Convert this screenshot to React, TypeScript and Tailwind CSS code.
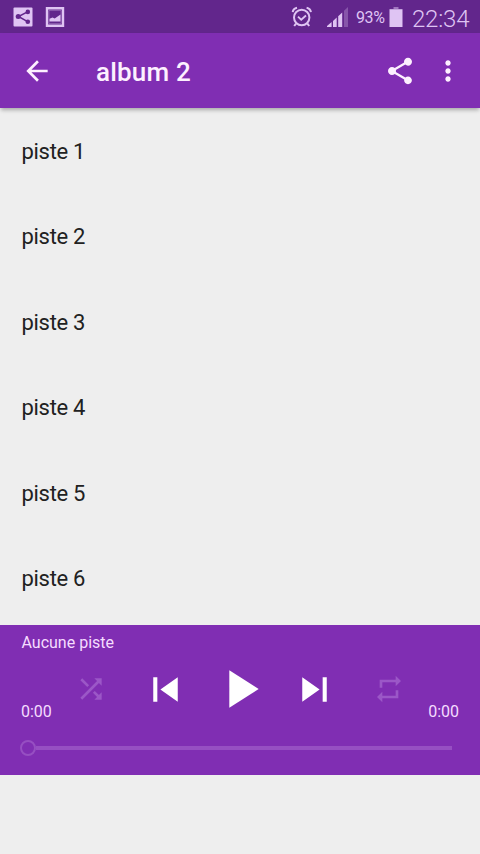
import React from 'react';

const TRACKS = ['piste 1', 'piste 2', 'piste 3', 'piste 4', 'piste 5', 'piste 6'];

const SHARE_PATH =
  'M18 16.08c-.76 0-1.44.3-1.96.77L8.91 12.7c.05-.23.09-.46.09-.7s-.04-.47-.09-.7l7.05-4.11c.54.5 1.25.81 2.04.81 1.66 0 3-1.34 3-3s-1.34-3-3-3-3 1.34-3 3c0 .24.04.47.09.7L8.04 9.81C7.5 9.31 6.79 9 6 9c-1.66 0-3 1.34-3 3s1.34 3 3 3c.79 0 1.5-.31 2.04-.81l7.12 4.16c-.05.21-.08.43-.08.65 0 1.61 1.31 2.92 2.92 2.92 1.61 0 2.92-1.31 2.92-2.92s-1.31-2.92-2.92-2.92z';

interface IconProps {
  d: string;
  className?: string;
}

const Icon: React.FC<IconProps> = ({ d, className = 'size-8' }) => (
  <svg viewBox="0 0 24 24" fill="currentColor" className={`shrink-0 ${className}`}>
    <path d={d} />
  </svg>
);

const StatusBar: React.FC = () => (
  <div className="flex h-[33px] items-center bg-[#62268c] pl-[13px] pr-[9px] pt-px text-[#dfc4f3]">
    <svg viewBox="0 0 20 20" className="size-5">
      <rect x="0.5" y="0.5" width="19" height="19" rx="1" fill="currentColor" />
      <path d="M15 4.7 5.5 9.5 15 14.8" fill="none" stroke="#62268c" strokeWidth="1.5" />
      <circle cx="14.8" cy="4.9" r="2.3" fill="#62268c" />
      <circle cx="5.2" cy="9.6" r="2.5" fill="#62268c" />
      <circle cx="14.8" cy="14.7" r="2.3" fill="#62268c" />
    </svg>
    <svg viewBox="0 0 20 20" className="ml-3 size-5">
      <path d="M2 1.3h16v17.4H2z" fill="none" stroke="currentColor" strokeWidth="2.4" />
      <path d="M4 3.5h12v13H4z" fill="none" stroke="currentColor" strokeWidth="1" opacity="0.3" />
      <path d="M4.5 14.5v-2.7l3-1.4 2.2 1.2 5.8-4v6.9z" fill="currentColor" />
    </svg>

    <div className="ml-auto flex items-center">
      <svg viewBox="0 0 22 22" className="size-[22px]" fill="none" stroke="currentColor" strokeWidth="2">
        <circle cx="10.7" cy="11.5" r="7.7" />
        <path d="m7 10.6 3.2 3.1 4.8-4.2" strokeWidth="1.8" />
        <path d="M1.7 6.2C2 4 3.7 2.2 6 1.7M19.9 6.2C19.6 4 17.9 2.2 15.6 1.7M5 17.6l-1.8 2.4M16.4 17.6l1.8 2.4" strokeWidth="2" />
      </svg>
      <svg viewBox="0 0 22 22" className="ml-[14px] size-[22px]" fill="currentColor">
        <path d="M0 21v-1l4.6-4v5zM6 14.9l3.7-3.3V21H6zM11.2 10.2l4-3.8V21h-4z" />
        <path d="m17 4.8 4-3.9V21h-4z" opacity="0.3" />
      </svg>
      <span className="ml-[7px] w-[29px] whitespace-nowrap pt-0.5 text-[16px] leading-5 tracking-[-0.4px]">93%</span>
      <svg viewBox="0 0 14 20" className="ml-1 h-5 w-[14px]" fill="currentColor">
        <path d="M4.5 0h5v2h-5z" opacity="0.5" />
        <path d="M.5 2.2h13V20H.5z" />
      </svg>
      <span className="ml-[9px] w-[59px] whitespace-nowrap pt-[3px] text-[24px] font-light leading-6 tracking-[-0.2px]">22:34</span>
    </div>
  </div>
);

const Toolbar: React.FC = () => (
  <header className="flex h-[75px] items-center bg-[#802eb3] px-4 text-[#fdf0ff] shadow-[0_3px_4px_-1px_rgba(0,0,0,0.3)]">
    <button className="ml-[5px]">
      <Icon d="M20 11H7.83l5.59-5.59L12 4l-8 8 8 8 1.41-1.41L7.83 13H20v-2z" />
    </button>
    <h1 className="ml-[43px] pt-[3px] text-[26px] font-medium leading-8 tracking-[0.2px]">album 2</h1>
    <button className="ml-auto">
      <Icon d={SHARE_PATH} />
    </button>
    <button className="ml-4">
      <Icon d="M12 8c1.1 0 2-.9 2-2s-.9-2-2-2-2 .9-2 2 .9 2 2 2zm0 2c-1.1 0-2 .9-2 2s.9 2 2 2 2-.9 2-2-.9-2-2-2zm0 6c-1.1 0-2 .9-2 2s.9 2 2 2 2-.9 2-2-.9-2-2-2z" />
    </button>
  </header>
);

const Player: React.FC = () => (
  <section className="h-[150px] bg-[#802eb3] text-[#f5dcff]">
    <p className="px-[21.5px] pt-2 text-[16px] leading-5">Aucune piste</p>

    {/* Controls */}
    <div className="mt-1 flex h-[65px] items-center px-[21px] pb-px text-white">
      <span className="-mb-px w-8 self-end text-[16px] leading-5 text-[#f5dcff]">0:00</span>
      <button className="ml-[22px] text-[#9b57c7]">
        <Icon d="M10.59 9.17L5.41 4 4 5.41l5.17 5.17 1.42-1.41zM14.5 4l2.04 2.04L4 18.59 5.41 20 17.96 7.46 20 9.5V4h-5.5zm.33 9.41l-1.41 1.41 3.13 3.13L14.5 20H20v-5.5l-2.04 2.04-3.13-3.13z" />
      </button>
      <button className="ml-[34px]">
        <Icon d="M6 6h2v12H6zm3.5 6l8.5 6V6z" className="size-[49px]" />
      </button>
      <button className="ml-[18px]">
        <Icon d="M8 5v14l11-7z" className="size-16" />
      </button>
      <button className="ml-[18px]">
        <Icon d="M6 18l8.5-6L6 6v12zM16 6v12h2V6h-2z" className="size-[49px]" />
      </button>
      <button className="ml-[34px] text-[#9b57c7]">
        <Icon d="M7 7h10v3l4-4-4-4v3H5v6h2V7zm10 10H7v-3l-4 4 4 4v-3h12v-6h-2v4z" />
      </button>
      <span className="-mb-px ml-auto self-end text-[16px] leading-5 text-[#f5dcff]">0:00</span>
    </div>

    {/* Seek bar */}
    <div className="mt-[18px] flex items-center pl-5 pr-7">
      <div className="size-4 rounded-full border-2 border-[#964fc2]" />
      <div className="h-1 flex-1 bg-[#964fc2]" />
    </div>
  </section>
);

const App: React.FC = () => {
  return (
    <div className="flex h-screen w-full flex-col overflow-hidden bg-[#eeeeee] font-[Roboto,sans-serif]">
      <StatusBar />
      <Toolbar />
      <ul className="flex h-[517px] flex-col">
        {TRACKS.map((track) => (
          <li
            key={track}
            className="flex h-[85.4px] shrink-0 items-center px-[21.5px] pt-[1.5px] text-[22px] tracking-[-0.3px] text-[#212121]"
          >
            {track}
          </li>
        ))}
      </ul>
      <Player />
    </div>
  );
};

export default App;
